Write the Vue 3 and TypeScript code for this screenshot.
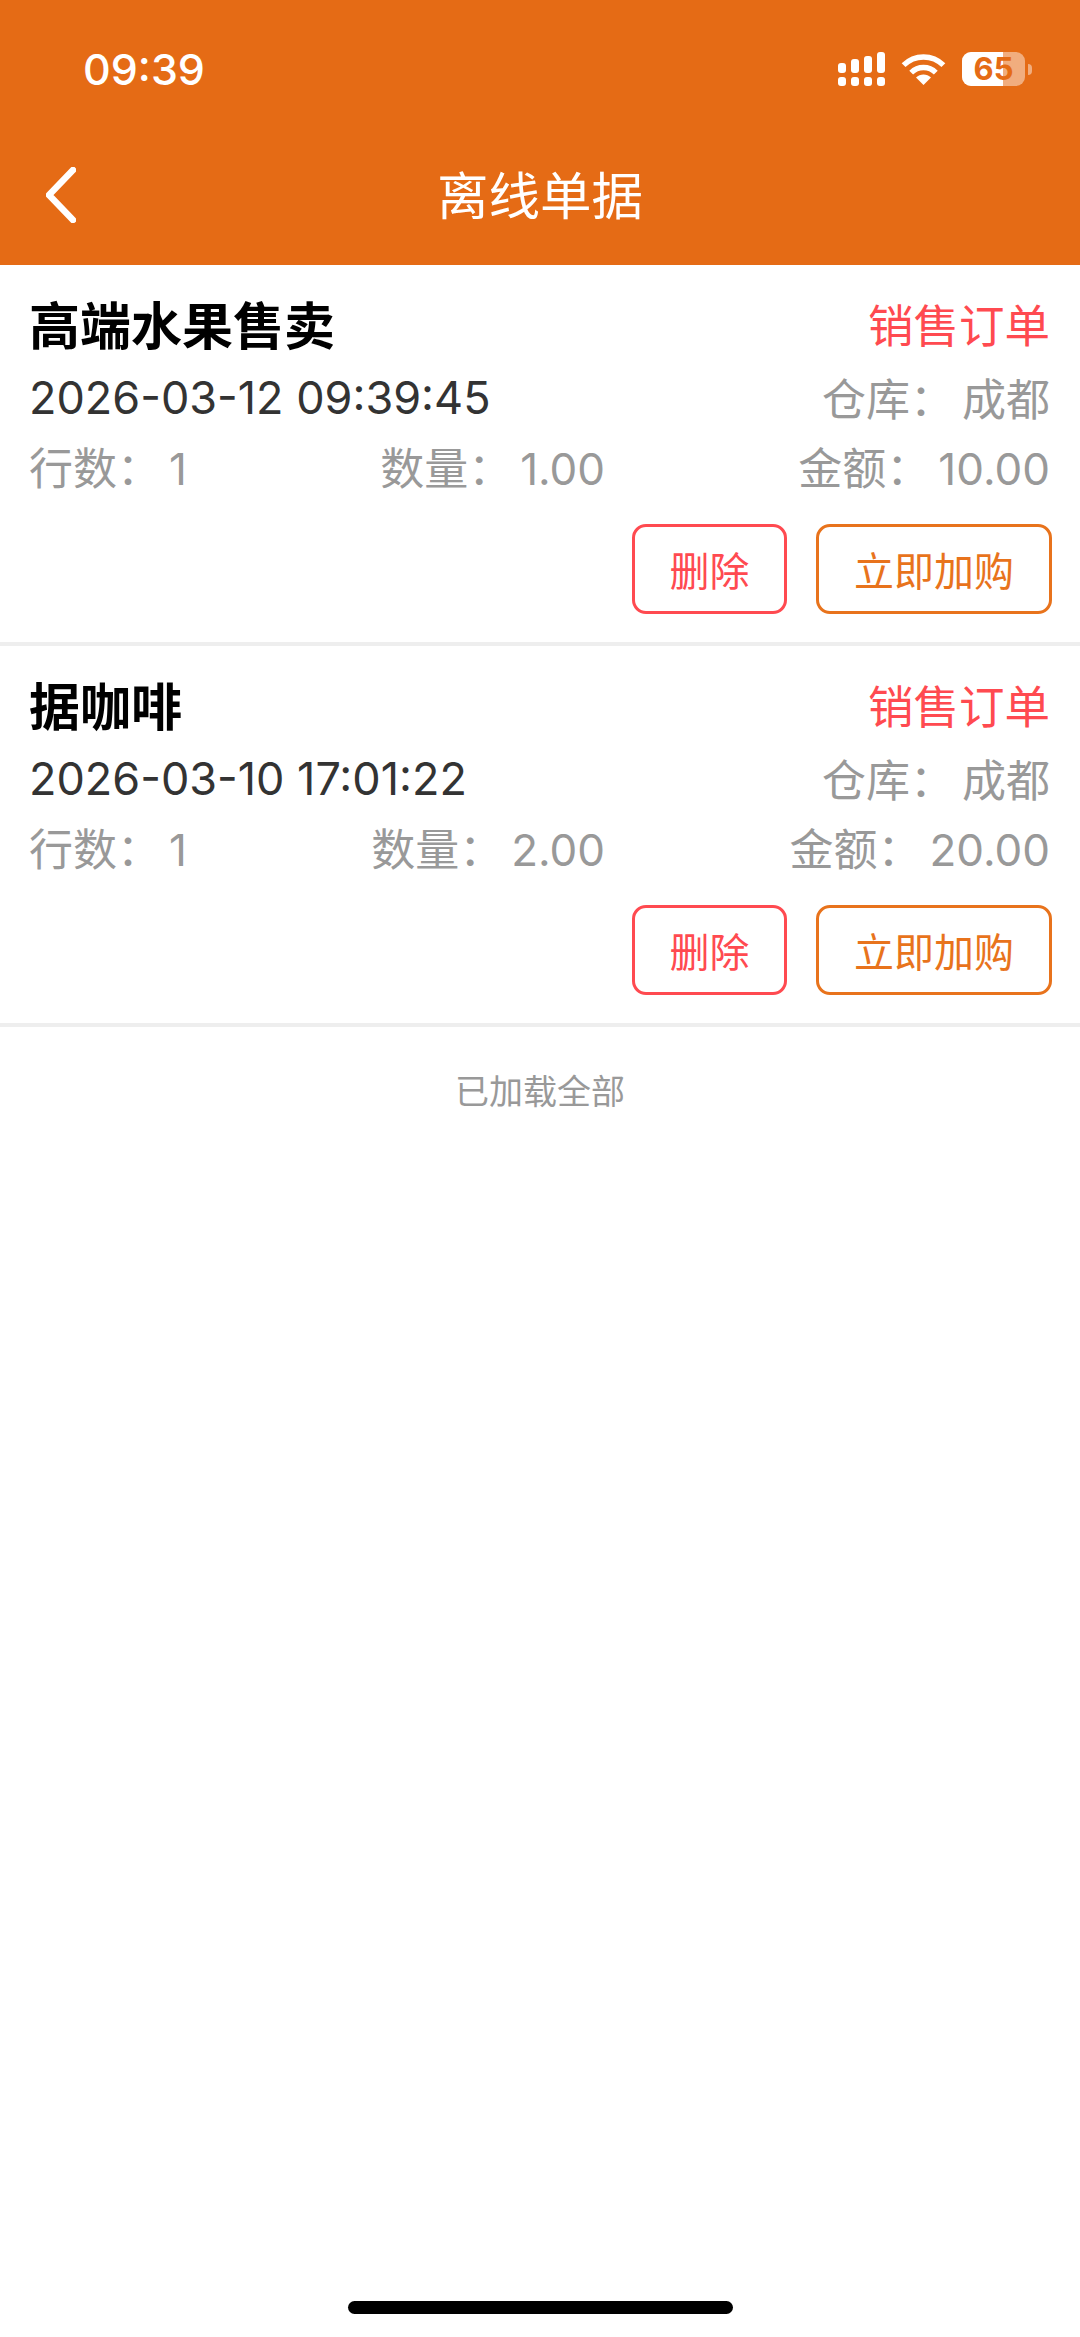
<template>
  <div class="page">
    <header class="header">
      <div class="status">
        <span class="status__time">09:39</span>
        <div class="status__icons">
          <svg class="signal" width="47" height="34" viewBox="0 0 47 34" fill="#fff">
            <rect x="0" y="11" width="8" height="10" rx="3" />
            <rect x="13" y="7" width="8" height="14" rx="3" />
            <rect x="26" y="4" width="8" height="17" rx="3" />
            <rect x="39" y="0" width="8" height="21" rx="3" />
            <rect x="0" y="25" width="8" height="9" rx="3" />
            <rect x="13" y="25" width="8" height="9" rx="3" />
            <rect x="26" y="25" width="8" height="9" rx="3" />
            <rect x="39" y="25" width="8" height="9" rx="3" />
          </svg>
          <svg class="wifi" width="45" height="31" viewBox="0 0 45 31" fill="none" stroke="#fff" stroke-width="5.4">
            <path d="M2.6 11.2C13.6 0.2 31.4 0.2 42.4 11.2" />
            <path d="M10.2 18.6C17 11.8 28 11.8 34.8 18.6" />
            <path d="M22.5 31L15 23.4C19.2 19.4 25.8 19.4 30 23.4Z" fill="#fff" stroke="none" />
          </svg>
          <div class="battery">
            <div class="battery__fill"></div>
            <span class="battery__text">65</span>
          </div>
          <div class="battery__tip"></div>
        </div>
      </div>
      <div class="nav">
        <svg class="nav__back" width="30" height="56" viewBox="0 0 30 56" fill="none" stroke="#fff" stroke-width="6.5" stroke-linecap="round" stroke-linejoin="round">
          <path d="M27 3L3 28L27 53" />
        </svg>
        <span class="nav__title">离线单据</span>
      </div>
    </header>

    <div v-for="item in orders" :key="item.time" class="order">
      <div class="order__row order__row--head">
        <span class="order__name">{{ item.name }}</span>
        <span class="order__type">销售订单</span>
      </div>
      <div class="order__row">
        <span class="order__time">{{ item.time }}</span>
        <span class="order__muted">仓库：<span class="order__gap">成都</span></span>
      </div>
      <div class="order__row order__row--stats">
        <span class="order__muted">行数：<span class="order__gap">{{ item.lines }}</span></span>
        <span class="order__muted">数量：<span class="order__gap">{{ item.qty }}</span></span>
        <span class="order__muted">金额：<span class="order__gap">{{ item.amount }}</span></span>
      </div>
      <div class="order__actions">
        <button class="btn btn--danger">删除</button>
        <button class="btn btn--primary">立即加购</button>
      </div>
    </div>

    <p class="loaded">已加载全部</p>
    <div class="home-bar"></div>
  </div>
</template>

<script setup lang="ts">
interface Order {
  name: string
  time: string
  lines: number
  qty: string
  amount: string
}

const orders: Order[] = [
  { name: '高端水果售卖', time: '2026-03-12 09:39:45', lines: 1, qty: '1.00', amount: '10.00' },
  { name: '据咖啡', time: '2026-03-10 17:01:22', lines: 1, qty: '2.00', amount: '20.00' }
]
</script>

<style>
body {
  background: #fff;
}
</style>

<style scoped>
.page {
  display: flex;
  flex-direction: column;
  height: 2337px;
  overflow: hidden;
  font-family: Inter, "Noto Sans CJK SC", sans-serif;
}

.header {
  background: #e56b15;
  height: 265px;
  color: #fff;
}

.status {
  display: flex;
  justify-content: space-between;
  align-items: center;
  height: 138px;
  padding: 0 48px 0 83px;
}

.status__time {
  font-size: 43px;
  font-weight: 500;
}

.status__icons {
  display: flex;
  align-items: center;
}

.signal {
  margin-right: 16px;
}

.wifi {
  margin-right: 16px;
}

.battery {
  position: relative;
  width: 63px;
  height: 34px;
  border-radius: 9px;
  background: rgba(255, 255, 255, 0.45);
}

.battery__fill {
  width: 41px;
  height: 100%;
  border-radius: 9px 0 0 9px;
  background: #fff;
}

.battery__text {
  position: absolute;
  left: 0;
  right: 0;
  top: 0;
  line-height: 34px;
  text-align: center;
  font-size: 31px;
  font-weight: 700;
  color: #e56b15;
}

.battery__tip {
  width: 4px;
  height: 11px;
  margin-left: 3px;
  border-radius: 0 4px 4px 0;
  background: rgba(255, 255, 255, 0.45);
}

.nav {
  position: relative;
  display: flex;
  justify-content: center;
  align-items: center;
  box-sizing: border-box;
  height: 116px;
  padding-bottom: 8px;
}

.nav__back {
  position: absolute;
  left: 46px;
  top: 29px;
}

.nav__title {
  font-size: 51.5px;
}

.order {
  padding: 30px 28px 28px 29px;
  border-bottom: 4px solid #eeeeee;
}

.order__row {
  display: flex;
  justify-content: space-between;
  align-items: center;
  height: 60px;
  margin: 0 2px 12px 0;
}

.order__row--head {
  height: 55px;
  margin-bottom: 17px;
}

.order__row--stats {
  height: 54px;
  margin-bottom: 0;
}

.order__name {
  font-size: 51px;
  font-weight: 600;
  color: #000;
}

.order__type {
  font-size: 45.5px;
  color: #ff4a50;
}

.order__time {
  font-size: 45px;
  color: #333;
}

.order__muted {
  font-size: 44px;
  color: #999;
}

.order__gap {
  margin-left: 8px;
}

.order__actions {
  display: flex;
  justify-content: flex-end;
  gap: 29px;
  margin-top: 31px;
}

.btn {
  height: 90px;
  background: #fff;
  border-radius: 14px;
  font-family: inherit;
  font-size: 40px;
}

.btn--danger {
  width: 155px;
  border: 3px solid #ff4a50;
  color: #ff4a50;
}

.btn--primary {
  width: 236px;
  border: 3px solid #e8731c;
  color: #e8731c;
}

.loaded {
  margin: 45px 0 0;
  line-height: 40px;
  text-align: center;
  font-size: 34px;
  color: #999;
}

.home-bar {
  width: 385px;
  height: 13px;
  margin: auto auto 23px;
  border-radius: 7px;
  background: #000;
}
</style>
